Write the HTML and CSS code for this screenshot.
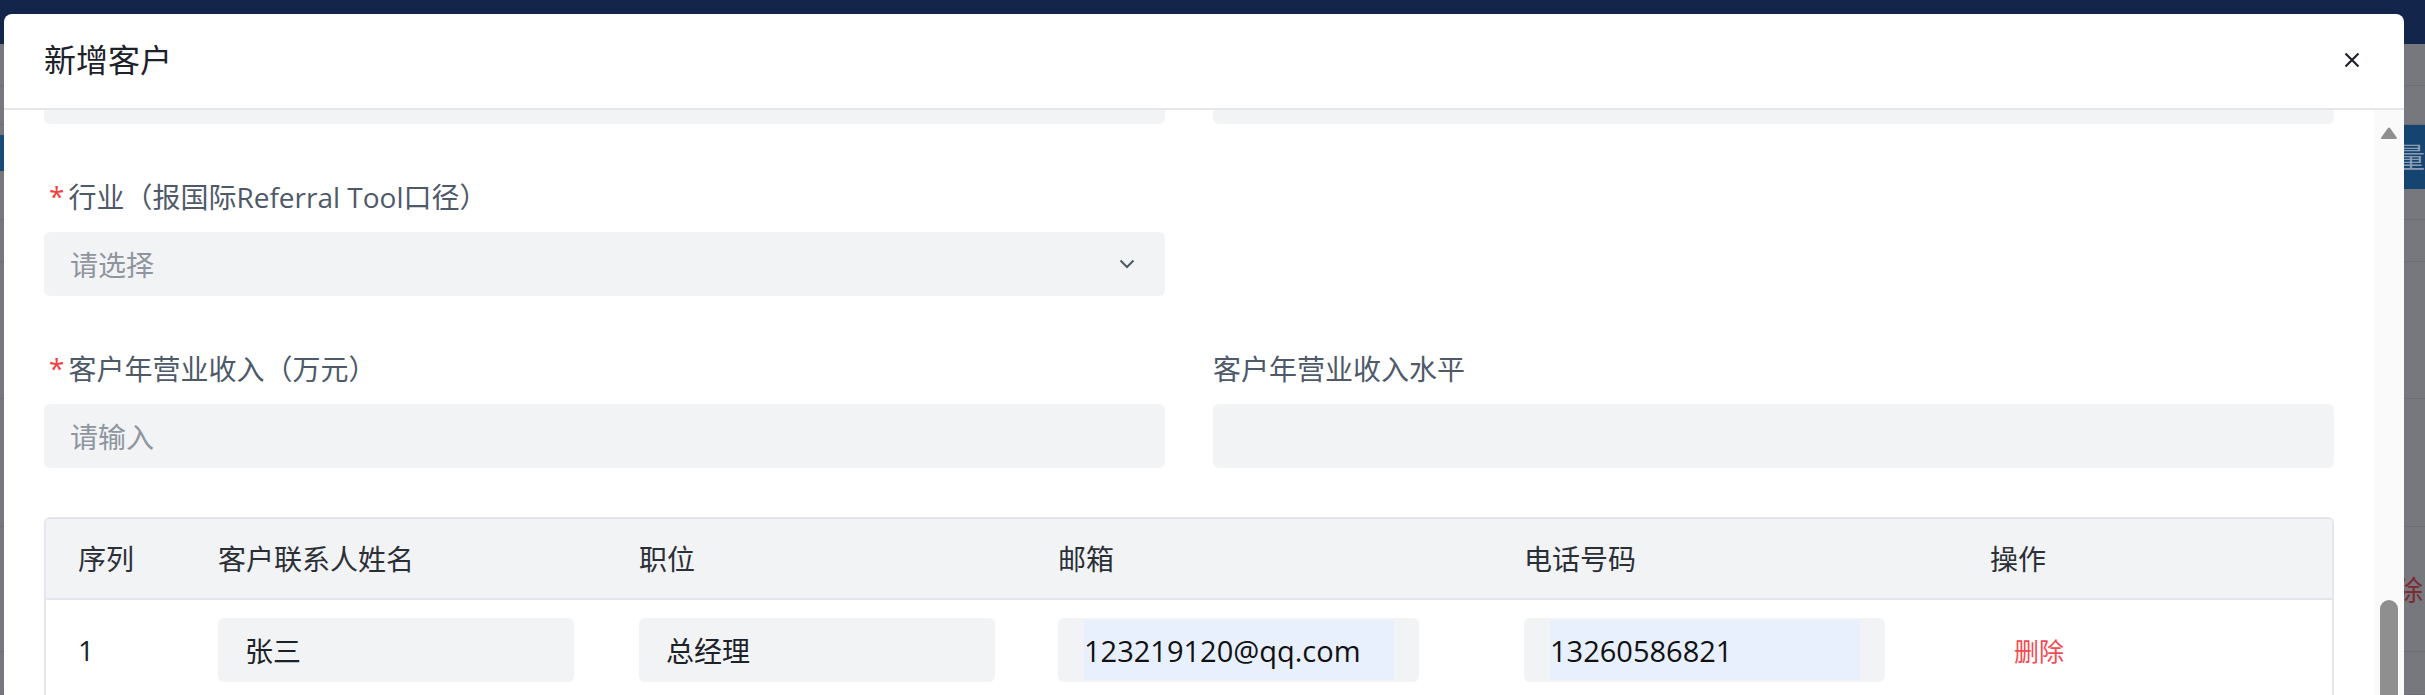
FILE: index.html
```html
<!DOCTYPE html>
<html lang="zh-CN">
<head>
<meta charset="utf-8">
<title>新增客户</title>
<link rel="stylesheet" href="styles.css">
</head>
<body>
<div class="backdrop">
  <div class="bd-nav"></div>
  <div class="bd-row bd-h42"></div>
  <div class="bd-row bd-h39"></div>
  <div class="bd-row bd-h64 bd-blue-row"><div class="bd-left-blue"></div><span class="bd-glyph">数量</span></div>
  <div class="bd-row bd-h31"></div>
  <div class="bd-row bd-h42"></div>
  <div class="bd-row bd-h137"></div>
  <div class="bd-row bd-h128"></div>
  <div class="bd-row bd-h125 bd-del-row"><span class="bd-del">删除</span></div>
  <div class="bd-row bd-fill"></div>
</div>

<div class="modal">
  <div class="modal-header">
    <h2 class="modal-title">新增客户</h2>
    <button class="modal-close" type="button" aria-label="关闭">
      <svg width="16" height="16" viewBox="0 0 16 16"><path d="M1.5 1.5 L14.5 14.5 M14.5 1.5 L1.5 14.5" stroke="#1f2329" stroke-width="2.2" fill="none"/></svg>
    </button>
  </div>
  <div class="modal-body">
    <div class="modal-scroll">
      <div class="form">
        <div class="form-grid">
          <div class="form-item"><div class="input"></div></div>
          <div class="form-item"><div class="input"></div></div>

          <div class="form-item">
            <div class="form-label"><span class="req">*</span>行业（报国际Referral Tool口径）</div>
            <div class="input select">
              <span class="placeholder">请选择</span>
              <svg class="chevron" width="16" height="10" viewBox="0 0 16 10"><path d="M1.5 1.5 L8 8 L14.5 1.5" stroke="#4e5969" stroke-width="2" fill="none"/></svg>
            </div>
          </div>
          <div class="form-item"></div>

          <div class="form-item">
            <div class="form-label"><span class="req">*</span>客户年营业收入（万元）</div>
            <div class="input"><span class="placeholder">请输入</span></div>
          </div>
          <div class="form-item">
            <div class="form-label">客户年营业收入水平</div>
            <div class="input"></div>
          </div>
        </div>

        <div class="table">
          <div class="tr thead">
            <div class="th">序列</div>
            <div class="th">客户联系人姓名</div>
            <div class="th">职位</div>
            <div class="th">邮箱</div>
            <div class="th">电话号码</div>
            <div class="th">操作</div>
          </div>
          <div class="tr tbody">
            <div class="td">1</div>
            <div class="td"><div class="cell-input"><span class="val">张三</span></div></div>
            <div class="td"><div class="cell-input"><span class="val">总经理</span></div></div>
            <div class="td"><div class="cell-input wide autofill"><span class="val">123219120@qq.com</span></div></div>
            <div class="td"><div class="cell-input wide autofill"><span class="val">13260586821</span></div></div>
            <div class="td"><span class="link-danger">删除</span></div>
          </div>
        </div>
      </div>
    </div>
    <div class="scrollbar">
      <svg class="sb-arrow" width="18" height="14" viewBox="0 0 18 14"><path d="M9 1.5 Q9.8 1.5 10.4 2.6 L16.8 11.6 Q17.6 13 16 13 L2 13 Q0.4 13 1.2 11.6 L7.6 2.6 Q8.2 1.5 9 1.5 Z" fill="#8f8f8f"/></svg>
      <div class="sb-thumb"></div>
    </div>
  </div>
</div>
</body>
</html>
```

FILE: styles.css
```css
* { box-sizing: border-box; }

html, body {
  margin: 0;
  padding: 0;
}

body {
  width: 2425px;
  height: 695px;
  overflow: hidden;
  position: relative;
  background: #76787e;
  font-family: "Open Sans", "Noto Sans CJK SC", sans-serif;
}

/* dimmed page underneath the dialog */
.backdrop {
  display: flex;
  flex-direction: column;
  height: 100%;
}

.bd-nav {
  flex: none;
  height: 44px;
  background: #13254a;
}

.bd-row {
  flex: none;
  border-bottom: 1px solid #6c6e74;
  display: flex;
}

.bd-h42 { height: 42px; }
.bd-h39 { height: 39px; }
.bd-h64 { height: 64px; }
.bd-h31 { height: 31px; }
.bd-h137 { height: 137px; }
.bd-h128 { height: 128px; }
.bd-h125 { height: 125px; }
.bd-fill { flex: 1; }

.bd-blue-row {
  align-items: flex-start;
  background: linear-gradient(to right, #76787e 0, #76787e 2300px, #154470 2300px);
  border-bottom: none;
}

.bd-left-blue {
  width: 4px;
  height: 36px;
  margin-top: 10px;
  background: #1a4a78;
}

.bd-glyph {
  margin-left: auto;
  align-self: center;
  font-size: 28px;
  line-height: 40px;
  color: #8b9db3;
  margin-right: 0;
}

.bd-del-row {
  justify-content: flex-end;
  align-items: flex-start;
}

.bd-del {
  margin-top: 45px;
  margin-right: 2px;
  font-size: 28px;
  line-height: 36px;
  color: #7c2b31;
}

/* dialog */
.modal {
  position: absolute;
  left: 4px;
  top: 14px;
  width: 2400px;
  height: 700px;
  background: #ffffff;
  border-radius: 8px 8px 0 0;
  display: flex;
  flex-direction: column;
  overflow: hidden;
}

.modal-header {
  flex: none;
  height: 96px;
  display: flex;
  align-items: center;
  justify-content: space-between;
  padding: 0 44px 2px 40px;
  border-bottom: 2px solid #e5e6eb;
}

.modal-title {
  margin: 0;
  font-size: 32px;
  font-weight: 400;
  line-height: 40px;
  color: #1d2129;
}

.modal-close {
  border: none;
  background: none;
  padding: 0;
  width: 16px;
  height: 16px;
  display: flex;
  cursor: pointer;
}

.modal-body {
  flex: 1;
  min-height: 0;
  display: flex;
}

.modal-scroll {
  flex: 1;
  min-width: 0;
  overflow: hidden;
  padding: 0 40px;
}

.form {
  margin-top: -50px;
}

.form-grid {
  display: grid;
  grid-template-columns: 1fr 1fr;
  column-gap: 48px;
  row-gap: 52px;
}

.form-label {
  height: 40px;
  margin-bottom: 16px;
  display: flex;
  align-items: center;
  font-size: 28px;
  color: #4e5969;
  white-space: nowrap;
}

.req {
  color: #f53f3f;
  margin: 0 4px 0 5px;
}

.input {
  height: 64px;
  background: #f2f3f5;
  border-radius: 6px;
  display: flex;
  align-items: center;
  justify-content: space-between;
  padding: 0 30px 0 26px;
  font-size: 28px;
}

.placeholder {
  color: #8f959e;
}

.chevron {
  flex: none;
}

/* contacts table */
.table {
  margin-top: 49px;
  border: 2px solid #e5e6eb;
  border-bottom: none;
  border-radius: 6px 6px 0 0;
  overflow: hidden;
}

.tr {
  display: grid;
  grid-template-columns: 140px 421px 419px 466px 466px 1fr;
  align-items: center;
}

.thead {
  height: 81px;
  background: #f2f3f5;
  border-bottom: 2px solid #e5e6eb;
}

.th {
  padding-left: 32px;
  font-size: 28px;
  line-height: 40px;
  color: #2b2f36;
}

.tbody {
  padding: 18px 0;
}

.td {
  padding-left: 32px;
  font-size: 28px;
  color: #1d2129;
}

.cell-input {
  width: 356px;
  height: 64px;
  background: #f2f3f5;
  border-radius: 6px;
  padding: 2px 25px 2px 27px;
  display: flex;
}

.cell-input.wide {
  width: 361px;
  padding-left: 26px;
}

.cell-input .val {
  flex: 1;
  display: flex;
  align-items: center;
  font-size: 28px;
  color: #1d2129;
  white-space: nowrap;
}

.cell-input.autofill .val {
  background: #e8f0fe;
  font-size: 29px;
  color: #111111;
}

.link-danger {
  margin-left: 24px;
  font-size: 25px;
  color: #f54a4f;
}

/* scrollbar */
.scrollbar {
  flex: none;
  width: 30px;
  background: #fafafa;
  display: flex;
  flex-direction: column;
  align-items: center;
  padding-top: 16px;
}

.sb-arrow {
  flex: none;
}

.sb-thumb {
  flex: none;
  width: 18px;
  height: 200px;
  margin-top: 460px;
  border-radius: 9px;
  background: #8f8f8f;
}
```
